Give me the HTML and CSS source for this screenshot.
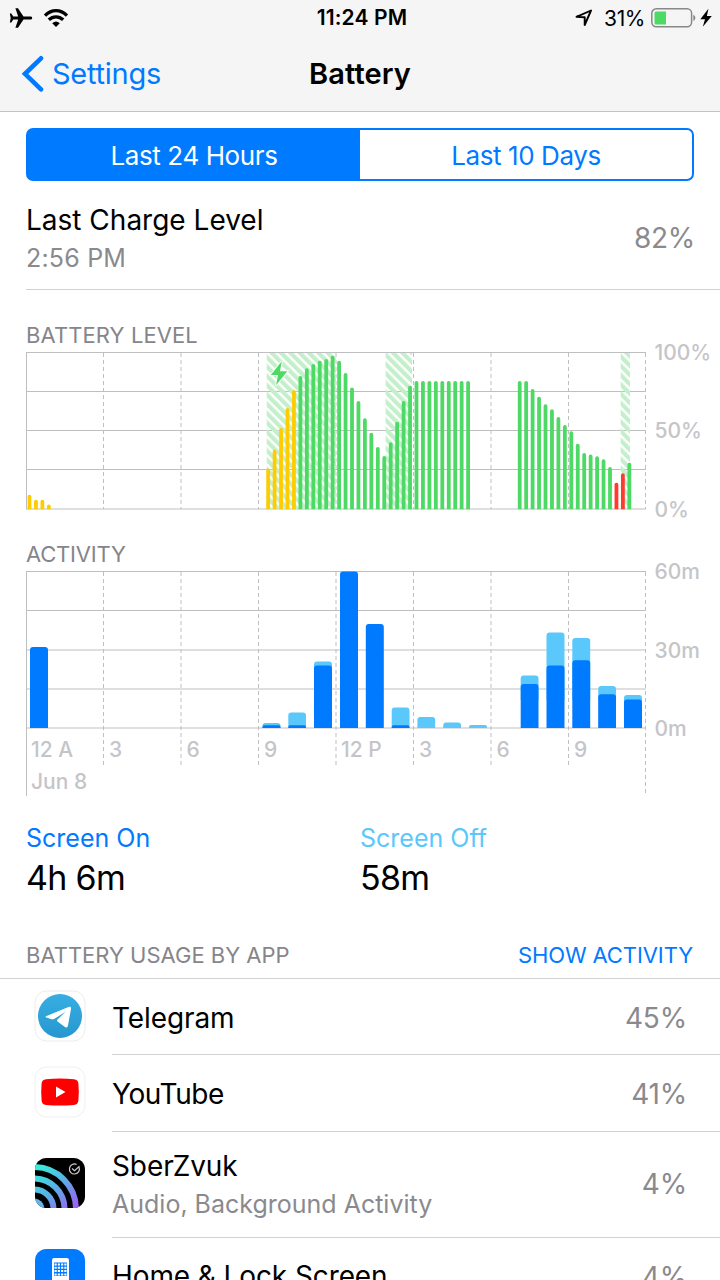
FILE: index.html
```html
<!DOCTYPE html>
<html lang="en">
<head>
<meta charset="utf-8">
<title>Battery</title>
<link rel="stylesheet" href="styles.css">
</head>
<body>
<div class="screen">
  <header class="top">
    <div class="status">
      <div class="status-side">
        <svg class="icon-plane" width="24" height="22" viewBox="0 0 24 22"><path d="M22 9.500H14.500L9 1.200H6.400L9.200 9.500H4.300L2.300 6.500H.8L1.700 11 .8 15.500H2.300L4.300 12.500H9.200L6.400 20.800H9L14.500 12.500H22Q23.200 12.200 23.200 11T22 9.500Z"/></svg>
        <svg class="icon-wifi" width="26" height="20" viewBox="0 0 26 20"><g fill="none" stroke="#000" stroke-width="3.300"><path d="M2 7.700Q7 2.700 13 2.700T24 7.700"/><path d="M5.800 11.800Q9 8.800 13 8.800T20.200 11.800"/></g><path d="M9.200 15.200Q13 11.900 16.800 15.200L13 19Z"/></svg>
      </div>
      <div class="clock">11:24 PM</div>
      <div class="status-side status-right">
        <svg class="icon-loc" width="18" height="18" viewBox="0 0 18 18"><path d="M1.500 7.800 16 1.500 9.700 16V8.300Z" fill="none" stroke="#000" stroke-width="1.900" stroke-linejoin="round"/></svg>
        <span class="pct">31%</span>
        <svg class="icon-batt" width="46" height="20" viewBox="0 0 46 20"><rect x=".8" y=".8" width="39.800" height="18" rx="4.500" fill="none" stroke="#88888a" stroke-width="1.500"/><path d="M5 3.500H15V16.500H5Q3.500 16.500 3.500 15V5Q3.500 3.500 5 3.500Z" fill="#4cd964"/><path d="M42.300 6.700Q44.400 7.500 44.400 9.800T42.300 13Z" fill="#88888a"/></svg>
        <svg class="icon-bolt" width="12" height="20" viewBox="0 0 12 20"><path d="M8.400 .8.300 11.200H5L2.800 18.800 11.800 8H6.900Z"/></svg>
      </div>
    </div>
    <nav class="nav">
      <a class="back"><svg width="24" height="38" viewBox="0 0 24 38"><path d="M21 3.300 5 18.800 21 34.300" fill="none" stroke="#007aff" stroke-width="4.600" stroke-linecap="round"/></svg><span class="back-text">Settings</span></a>
      <h1 class="title">Battery</h1>
      <span></span>
    </nav>
  </header>

  <div class="segments">
    <div class="segment segment-on"><span class="segment-label">Last 24 Hours</span></div>
    <div class="segment"><span class="segment-label">Last 10 Days</span></div>
  </div>

  <section class="charge">
    <div><div class="charge-title">Last Charge Level</div><div class="charge-time">2:56 PM</div></div>
    <div class="charge-value">82%</div>
  </section>

  <h2 class="heading heading-level">BATTERY LEVEL</h2>
  <svg class="chart" width="720" height="188" viewBox="0 337 720 188">
    <defs>
      <pattern id="hatch" width="6.600" height="8" patternUnits="userSpaceOnUse" patternTransform="rotate(-45)"><rect width="4.200" height="8" fill="#c3f0ca"/></pattern>
      <clipPath id="plot"><path d="M20 345H660V509.300H20Z"/></clipPath>
    </defs>
    <g class="dash"><path d="M103.500 353V509M181 353V509M258.500 353V509M336 353V509M413.500 353V509M491 353V509M568.500 353V509M645.500 353V509"/></g>
    <path class="grid" d="M26 352.500H646M26 391.500H646M26 430.500H646M26 469.500H646M26 509H646M26.500 352V509"/>
    <g fill="url(#hatch)"><path d="M266.700 353H336V509H266.700ZM385.600 353H412V509H385.600ZM620.700 353H630V509H620.700Z"/></g>
    <g class="level" clip-path="url(#plot)">
      <path stroke="#ffcc00" d="M29.500 496.700V512M35.950 501.600V512M42.400 501.600V512M48.850 506.300V512M268.150 470.300V512M274.600 451.500V512M281.050 430V512M287.500 410V512M293.950 392V512"/>
      <path stroke="#4cd964" d="M300.400 378V512M306.850 370.200V512M313.300 366V512M319.750 362.700V512M326.200 361V512M332.650 357.600V512M339.100 362.700V512M345.550 375V512M352 389.300V512M358.450 403V512M364.900 420.200V512M371.350 434.600V512M377.800 449V512M384.250 458V512M390.700 444.200V512M397.150 423.600V512M403.600 403V512M410.050 387.600V512M416.500 382.800V512M422.950 382.800V512M429.400 382.800V512M435.850 382.800V512M442.300 382.800V512M448.750 382.800V512M455.200 382.800V512M461.650 382.800V512M468.100 382.800V512M519.700 382.800V512M526.150 382.800V512M532.600 390.900V512M539.050 398.600V512M545.500 406.200V512M551.950 411.200V512M558.400 418.900V512M564.850 426.900V512M571.300 433.200V512M577.750 445.600V512M584.200 454.800V512M590.650 456.500V512M597.100 458.200V512M603.550 461.200V512M610 468.900V512M629.350 464.600V512"/>
      <path stroke="#ff3b30" d="M616.450 484.600V512M622.900 475.200V512"/>
    </g>
    <path class="bolt" d="M281.800 361.300 270.800 375H278L276 385.300 287.300 371.200H280Z"/>
    <g class="axis"><text x="654.500" y="360">100%</text><text x="654.500" y="438">50%</text><text x="654.500" y="516.500">0%</text></g>
  </svg>

  <h2 class="heading heading-activity">ACTIVITY</h2>
  <svg class="chart" width="720" height="244" viewBox="0 557 720 244">
    <g class="dash"><path d="M103.500 572V767M181 572V767M258.500 572V767M336 572V767M413.500 572V767M491 572V767M568.500 572V767M645.500 572V796"/></g>
    <path class="grid" d="M26 571.500H646M26 610.500H646M26 650H646M26 689H646M26 728H646M26.500 571V796"/>
    <path class="off" d="M262.500 728V726Q262.500 723 265.500 723H277.500Q280.500 723 280.500 726V728ZM288.300 728V715.500Q288.300 712.500 291.300 712.500H303Q306 712.500 306 715.500V728ZM314 680V664.500Q314 661.500 317 661.500H329Q332 661.500 332 664.500V680ZM391.700 728V710.500Q391.700 707.500 394.700 707.500H406.500Q409.500 707.500 409.500 710.500V728ZM417.400 728V720Q417.400 717 420.400 717H432.200Q435.200 717 435.200 720V728ZM443.200 728V725.500Q443.200 722.500 446.200 722.500H458Q461 722.500 461 725.500V728ZM469 728V727Q469 725 471 725H485Q487 725 487 727V728ZM520.700 700V678.500Q520.700 675.500 523.700 675.500H535.500Q538.500 675.500 538.500 678.500V700ZM546.500 700V635.500Q546.500 632.500 549.500 632.500H561.500Q564.500 632.500 564.500 635.500V700ZM572.300 700V641Q572.300 638 575.300 638H587.200Q590.200 638 590.200 641V700ZM598.200 700V689Q598.200 686 601.200 686H613Q616 686 616 689V700ZM624 705V698Q624 695 627 695H639Q642 695 642 698V705Z"/>
    <path class="on" d="M30 728V650Q30 647 33 647H45Q48 647 48 650V728ZM262.500 728V727Q262.500 725.300 264 725.300H279Q280.500 725.300 280.500 727V728ZM288.300 728V727Q288.300 725.300 290 725.300H304.500Q306 725.300 306 727V728ZM314 728V668.500Q314 665.500 317 665.500H329Q332 665.500 332 668.500V728ZM340 728V574.500Q340 571.500 343 571.500H355Q358 571.500 358 574.500V728ZM365.800 728V627Q365.800 624 368.800 624H380.800Q383.800 624 383.800 627V728ZM391.700 728V727Q391.700 725.300 393.500 725.300H408Q409.500 725.300 409.500 727V728ZM520.700 728V687Q520.700 684 523.700 684H535.500Q538.500 684 538.500 687V728ZM546.500 728V668.500Q546.500 665.500 549.500 665.500H561.500Q564.500 665.500 564.500 668.500V728ZM572.300 728V663.300Q572.300 660.300 575.300 660.300H587.200Q590.200 660.300 590.200 663.300V728ZM598.200 728V697.300Q598.200 694.300 601.200 694.300H613Q616 694.300 616 697.300V728ZM624 728V702.500Q624 699.500 627 699.500H639Q642 699.500 642 702.500V728Z"/>
    <g class="axis"><text x="654.500" y="579">60m</text><text x="654.500" y="657.500">30m</text><text x="654.500" y="735.500">0m</text><text x="31" y="757">12 A</text><text x="109" y="757">3</text><text x="186.500" y="757">6</text><text x="264" y="757">9</text><text x="341" y="757">12 P</text><text x="419" y="757">3</text><text x="496.500" y="757">6</text><text x="574" y="757">9</text><text x="31" y="788.500">Jun 8</text></g>
  </svg>

  <section class="totals">
    <div class="total"><div class="total-on">Screen On</div><div class="total-value">4h 6m</div></div>
    <div class="total"><div class="total-off">Screen Off</div><div class="total-value">58m</div></div>
  </section>

  <div class="usage-head"><h2 class="usage-title">BATTERY USAGE BY APP</h2><a class="usage-link">SHOW ACTIVITY</a></div>
  <ul class="apps">
    <li class="app">
      <svg class="app-icon" width="52" height="52" viewBox="0 0 52 52"><defs><linearGradient id="tg" x2="0" y2="1"><stop stop-color="#37aee2"/><stop offset="1" stop-color="#2597d0"/></linearGradient></defs><rect x="1" y="1" width="50" height="50" rx="11.500" fill="#fff" stroke="#ececec"/><circle cx="26" cy="26" r="22" fill="url(#tg)"/><path d="M12 26.300 34.500 17Q37.500 16 37 19L34 35.500Q33.500 38.500 31 37L23.500 31.500Q22.500 30.500 23.500 29.500L31.500 21.800 20.500 28.800Q19 29.600 17.500 29.200L12.500 27.600Q11 27 12 26.300Z" fill="#fff"/></svg>
      <div class="app-body"><div class="app-text"><div class="app-name">Telegram</div></div><div class="app-value">45%</div></div>
    </li>
    <li class="app">
      <svg class="app-icon" width="52" height="52" viewBox="0 0 52 52"><rect x="1" y="1" width="50" height="50" rx="11.500" fill="#fff" stroke="#f0f0f0"/><path d="M12 13.200Q26 12 40 13.200 44 13.500 44.400 17.500 45.200 26 44.400 34.500 44 38.500 40 39 26 40.200 12 39 8 38.500 7.600 34.500 6.800 26 7.600 17.500 8 13.500 12 13.200Z" fill="#f00"/><path d="M22 20.500V31.500L31.500 26Z" fill="#fff"/></svg>
      <div class="app-body"><div class="app-text"><div class="app-name app-name-tight">YouTube</div></div><div class="app-value">41%</div></div>
    </li>
    <li class="app app-tall">
      <svg class="app-icon" width="52" height="52" viewBox="0 0 52 52"><defs><linearGradient id="sz" gradientUnits="userSpaceOnUse" x1="4" y1="8" x2="44" y2="52"><stop offset="0" stop-color="#35f1d8"/><stop offset=".5" stop-color="#5cabe8"/><stop offset="1" stop-color="#a557f5"/></linearGradient><clipPath id="szc"><rect x="1" y="1" width="50" height="50" rx="11.500"/></clipPath></defs><g clip-path="url(#szc)"><path d="M0 0H52V52H0Z"/><g fill="none" stroke="url(#sz)" stroke-width="6"><circle cx="0" cy="52" r="42"/><circle cx="0" cy="52" r="30.500"/><circle cx="0" cy="52" r="19.500"/></g><circle cx="0" cy="52" r="10.500" fill="#63b5ed"/></g><path d="M45.200 10.500A5 5 0 1 1 42.600 7.500M38 11.500 40.500 13.700 45.500 9.200" fill="none" stroke="#ccc" stroke-width="1.200"/></svg>
      <div class="app-body"><div class="app-text"><div class="app-name">SberZvuk</div><div class="app-detail">Audio, Background Activity</div></div><div class="app-value">4%</div></div>
    </li>
    <li class="app">
      <svg class="app-icon" width="52" height="52" viewBox="0 0 52 52"><rect x="1" y="1" width="50" height="50" rx="11.500" fill="#007aff"/><rect x="18" y="10" width="17" height="33" rx="2.200" fill="#fff"/><path d="M20 14.500H33V28H20Z" fill="#007aff"/><path d="M20.500 16.500H32.500M20.500 19.800H32.500M20.500 23.100H32.500M20.500 26.400H32.500" stroke="#fff" stroke-width="2" stroke-dasharray="2.200 1.070"/></svg>
      <div class="app-body"><div class="app-text"><div class="app-name">Home &amp; Lock Screen</div></div><div class="app-value">4%</div></div>
    </li>
  </ul>
</div>
</body>
</html>
```
FILE: styles.css
```css
* { box-sizing: border-box; }
body { margin: 0; background: #fff; font-family: Inter, "Liberation Sans", sans-serif; color: #000; }
h1, h2, ul { margin: 0; padding: 0; font-weight: 400; }
svg { display: block; flex: none; }
.screen { width: 720px; height: 1280px; overflow: hidden; white-space: nowrap; }
.top { height: 112px; background: #f5f5f6; border-bottom: 1px solid #c3c3c5; }
.status { display: grid; grid-template-columns: 1fr auto 1fr; height: 36px; align-items: center; padding: 0 8px 0 9px; }
.status-side { display: flex; align-items: center; }
.status-right { justify-content: flex-end; }
.icon-wifi { margin-left: 10px; }
.clock { font-size: 21px; font-weight: 600; line-height: 36px; letter-spacing: .15px; margin-left: 3px; }
.pct { font-size: 21px; margin: 0 6px 0 11px; letter-spacing: -.4px; }
.icon-bolt { margin-left: 3px; }
.nav { display: grid; grid-template-columns: 1fr auto 1fr; height: 75px; align-items: center; padding: 0 20px; }
.back { display: flex; align-items: center; color: #007aff; gap: 8px; font-size: 29px; letter-spacing: -.25px; }
.title { font-size: 29px; font-weight: 600; letter-spacing: .1px; }
.segments { display: flex; height: 53px; margin: 16px 26px 0; border: 2px solid #007aff; border-radius: 7px; font-size: 26px; letter-spacing: -.4px; color: #007aff; }
.segment { flex: 1; display: flex; align-items: center; justify-content: center; padding-top: 1px; }
.segment-on { background: #007aff; color: #fff; }
.charge { display: flex; justify-content: space-between; align-items: center; height: 109px; margin-left: 26px; padding: 6px 25px 0 0; border-bottom: 1px solid #d2d2d4; }
.charge-title { font-size: 28px; line-height: 40px; }
.charge-time { font-size: 25px; line-height: 36px; letter-spacing: .2px; color: #8a8a8e; }
.charge-value { font-size: 28px; letter-spacing: -.3px; color: #8a8a8e; }
.heading { margin-left: 26px; font-size: 22px; line-height: 28px; color: #85858a; }
.heading-level { padding-top: 31px; height: 47px; letter-spacing: .1px; }
.heading-activity { padding-top: 15px; height: 32px; letter-spacing: -.2px; }
.chart { overflow: visible; }
.grid { fill: none; stroke: #bfbfc1; stroke-width: 1; }
.dash { fill: none; stroke: #bfbfc3; stroke-width: 1; stroke-dasharray: 4 3; }
.level { fill: none; stroke-width: 3.800; stroke-linecap: round; }
.bolt { fill: #4cd964; stroke: #fff; stroke-width: 2; paint-order: stroke; }
.off { fill: #5ac8fa; }
.on { fill: #007aff; }
.axis { font-size: 21px; fill: #c5c5c8; font-weight: 500; }
.totals { display: flex; height: 125px; padding: 19px 26px 0; }
.total { flex: 1; }
.total-on, .total-off { font-size: 25px; line-height: 36px; color: #007aff; }
.total-off { color: #5ac8fa; }
.total-value { font-size: 34px; line-height: 44px; letter-spacing: -.7px; }
.usage-head { display: flex; justify-content: space-between; align-items: center; height: 53px; padding: 6px 27px 0 26px; border-bottom: 1px solid #d2d2d4; }
.usage-title, .usage-link { font-size: 22px; color: #85858a; }
.usage-link { color: #007aff; letter-spacing: -.1px; }
.apps { list-style: none; }
.app { display: flex; align-items: center; height: 76.500px; padding-left: 34px; }
.app:first-child { height: 76px; }
.app-tall { height: 106px; }
.app-icon { margin: 0 26px 3px 0; }
.app-body { flex: 1; height: 100%; display: flex; align-items: center; justify-content: space-between; border-bottom: 1px solid #d2d2d4; padding: 3px 33px 0 0; }
.app-tall .app-body { padding-top: 0; }
.app-name { font-size: 28px; line-height: 39px; letter-spacing: -.1px; }
.app-name-tight { letter-spacing: -.4px; }
.app-detail { font-size: 25px; line-height: 36px; color: #8a8a8e; }
.app-value { font-size: 28px; letter-spacing: -.2px; color: #8a8a8e; }
```
